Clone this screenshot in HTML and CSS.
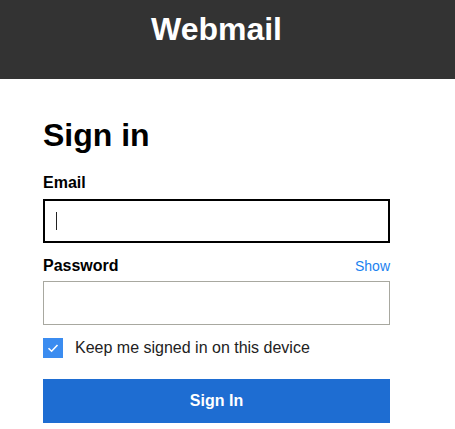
FILE: index.html
```html
<!DOCTYPE html>
<html lang="en">
<head>
    <meta charset="UTF-8">
    <meta name="viewport" content="width=device-width, initial-scale=1.0">
    <title>Webmail - Sign in</title>
    <link rel="stylesheet" href="styles.css">
</head>
<body>
    <header class="topbar">
        <div class="inner">
            <h1 class="brand">Webmail</h1>
        </div>
    </header>
    <main class="inner">
        <h2 class="title">Sign in</h2>
        <form class="login">
            <label class="label" for="email">Email</label>
            <div class="field focused">
                <span class="caret"></span>
            </div>
            <div class="label-row">
                <label class="label" for="password">Password</label>
                <a class="show" href="#">Show</a>
            </div>
            <div class="field"></div>
            <label class="remember">
                <span class="check">
                    <svg width="14" height="14" viewBox="0 0 14 14">
                        <path d="M2.5 7.2 L5.6 10.2 L11.5 4" fill="none" stroke="#fff" stroke-width="1.6"/>
                    </svg>
                </span>
                Keep me signed in on this device
            </label>
            <button class="submit" type="button">Sign In</button>
        </form>
    </main>
</body>
</html>
```

FILE: styles.css
```css
* {
    margin: 0;
    padding: 0;
    box-sizing: border-box;
}
body {
    font-family: "Liberation Sans", Arial, sans-serif;
    background: #fff;
    color: #000;
}
.inner {
    width: 347px;
    margin-left: 43px;
}
.topbar {
    background: #333;
    height: 79px;
    padding-top: 9px;
}
.brand {
    text-align: center;
    color: #fff;
    font-size: 32px;
    font-weight: bold;
    line-height: 40px;
}
.title {
    font-size: 32px;
    font-weight: bold;
    line-height: 37px;
    margin-top: 38px;
}
.login {
    display: flex;
    flex-direction: column;
    margin-top: 20px;
}
.label {
    font-size: 16px;
    font-weight: bold;
    line-height: 18px;
}
.label-row {
    display: flex;
    justify-content: space-between;
    align-items: baseline;
    margin-top: 14px;
}
.show {
    color: #1a82f0;
    font-size: 14px;
    text-decoration: none;
}
.field {
    height: 44px;
    border: 1px solid #a8a8a0;
    margin-top: 6px;
    display: flex;
    align-items: center;
    padding-left: 11px;
}
.field.focused {
    border: 2px solid #000;
    height: 44px;
    margin-top: 7px;
}
.caret {
    width: 1px;
    height: 18px;
    background: #222;
}
.remember {
    display: flex;
    align-items: center;
    gap: 12px;
    margin-top: 13px;
    font-size: 16px;
    color: #222;
    line-height: 20px;
}
.check {
    width: 20px;
    height: 20px;
    background: #3b8cf0;
    display: flex;
    align-items: center;
    justify-content: center;
}
.submit {
    margin-top: 21px;
    height: 44px;
    border: none;
    background: #1e6dd2;
    color: #fff;
    font-family: inherit;
    font-size: 16px;
    font-weight: bold;
}
```
